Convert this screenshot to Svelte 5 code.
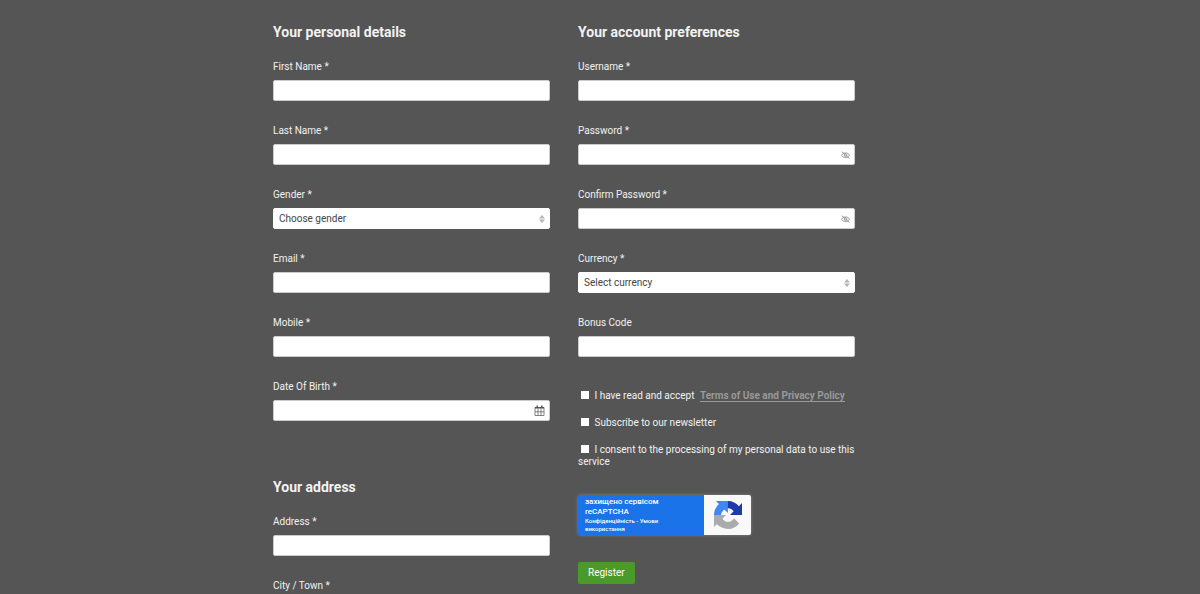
<script lang="ts">
	type Field = { id: string; label: string; kind?: string; placeholder?: string };

	const personal: Field[] = [
		{ id: "firstName", label: "First Name *" },
		{ id: "lastName", label: "Last Name *" },
		{ id: "gender", label: "Gender *", kind: "select", placeholder: "Choose gender" },
		{ id: "email", label: "Email *", kind: "email" },
		{ id: "mobile", label: "Mobile *", kind: "tel" },
		{ id: "birth", label: "Date Of Birth *", kind: "date" }
	];

	const address: Field[] = [
		{ id: "address", label: "Address *" },
		{ id: "city", label: "City / Town *" }
	];

	const account: Field[] = [
		{ id: "username", label: "Username *" },
		{ id: "password", label: "Password *", kind: "password" },
		{ id: "confirm", label: "Confirm Password *", kind: "password" },
		{ id: "currency", label: "Currency *", kind: "select", placeholder: "Select currency" },
		{ id: "bonus", label: "Bonus Code" }
	];
</script>

{#snippet fieldRow(field: Field)}
	<div class="field">
		<label for={field.id}>{field.label}</label>
		<div class="control">
			{#if field.kind === "select"}
				<select id={field.id}>
					<option>{field.placeholder}</option>
				</select>
				<svg class="icon arrows" viewBox="0 0 6 8" aria-hidden="true">
					<path d="M3 0L6 3.4H0zM3 8L0 4.6H6z" fill="#b4b4b4" />
				</svg>
			{:else}
				<input id={field.id} type={field.kind === "date" ? "text" : (field.kind ?? "text")} />
			{/if}
			{#if field.kind === "password"}
				<button class="icon eye" type="button" aria-label="Show password">
					<svg viewBox="0 0 16 14" aria-hidden="true">
						<g fill="none" stroke="#8c8c8c" stroke-width="1.5">
							<path d="M1 7.5C4 1.8 12 1.8 15 7.5C12 13 4 13 1 7.5z" />
							<circle cx="8" cy="7.2" r="2.5" />
							<path d="M1 1L15 13.2" />
						</g>
					</svg>
				</button>
			{:else if field.kind === "date"}
				<button class="icon calendar" type="button" aria-label="Open calendar">
					<svg viewBox="0 0 10 11" aria-hidden="true">
						<path d="M.5 2.5h9v8h-9zM.5 6.8h9M3.5 3.5v7M6.5 3.5v7" fill="none" stroke="#666" stroke-width=".8" />
						<path d="M.5 2h9v1.5h-9zM2 .5h1.5v2H2zM6.5.5H8v2H6.5z" fill="#555" />
					</svg>
				</button>
			{/if}
		</div>
	</div>
{/snippet}

<form class="register">
	<div class="column">
		<section>
			<h2>Your personal details</h2>
			{#each personal as field}
				{@render fieldRow(field)}
			{/each}
		</section>
		<section>
			<h2>Your address</h2>
			{#each address as field}
				{@render fieldRow(field)}
			{/each}
		</section>
	</div>

	<div class="column">
		<section>
			<h2>Your account preferences</h2>
			{#each account as field}
				{@render fieldRow(field)}
			{/each}
		</section>

		<div class="checks">
			<div class="check">
				<input id="terms" type="checkbox" />
				<label for="terms">I have read and accept</label>
				<a href="#terms">Terms of Use and Privacy Policy</a>
			</div>
			<div class="check">
				<input id="news" type="checkbox" />
				<label for="news">Subscribe to our newsletter</label>
			</div>
			<div class="check">
				<input id="consent" type="checkbox" />
				<label for="consent">I consent to the processing of my personal data to use this service</label>
			</div>
		</div>

		<div class="captcha">
			<div class="captcha-text">
				<span>захищено сервісом</span>
				<strong>reCAPTCHA</strong>
				<small><a href="#privacy">Конфіденційність</a> - <a href="#use">Умови використання</a></small>
			</div>
			<div class="captcha-logo">
				<svg viewBox="0 0 64 64" aria-hidden="true">
					<path d="M64 31.955c-.002-.46-.012-.918-.033-1.373V4.645l-7.171 7.171C50.927 4.632 42 .046 32 .046c-10.4 0-19.643 4.954-25.477 12.627l11.754 11.878a15.57 15.57 0 0 1 4.76-5.341c2.052-1.6 4.96-2.91 8.962-2.91.483 0 .856.056 1.13.163 4.958.391 9.255 3.127 11.786 7.1l-8.32 8.321z" fill="#1c3aa9" />
					<path d="M31.862.094c-.46.002-.918.012-1.373.033H4.55l7.171 7.17C4.5 13.2 0 22 0 32.1c0 10.4 4.854 19.6 12.527 25.5L24.46 45.8a15.6 15.6 0 0 1-5.341-4.76c-1.6-2.05-2.91-4.96-2.91-8.96 0-.483.056-.856.163-1.13.391-4.96 3.127-9.26 7.1-11.79l8.32 8.32z" fill="#4285f4" />
					<path d="M.001 32.045c.002.46.012.918.033 1.373v25.937l7.171-7.171C13.07 59.37 22 63.95 32 63.95c10.4 0 19.64-4.95 25.48-12.63L45.72 39.45a15.57 15.57 0 0 1-4.76 5.34c-2.05 1.6-4.96 2.91-8.96 2.91-.483 0-.856-.056-1.13-.163-4.96-.391-9.26-3.127-11.79-7.1l8.32-8.32z" fill="#ababab" />
				</svg>
			</div>
		</div>

		<button class="submit" type="submit">Register</button>
	</div>
</form>

<style>
	:global(html) {
		scrollbar-width: none;
	}

	:global(body) {
		background: #555;
	}

	/* two columns, with free space kept on the right */
	.register {
		box-sizing: border-box;
		max-width: 654px;
		margin: 0 auto;
		padding: 24px 72px 0 0;
		display: grid;
		grid-template-columns: 1fr 1fr;
		column-gap: 28px;
		color: #f2f2f2;
		font-family: Roboto, "Liberation Sans", sans-serif;
		font-size: 10px;
		line-height: 12px;
	}

	h2 {
		margin: 0 0 20px;
		font-size: 14px;
		line-height: 16px;
		font-weight: 700;
	}

	section + section {
		margin-top: 35px;
	}

	.field {
		padding-bottom: 23px;
	}

	.field label {
		display: block;
		padding-top: 1px;
		margin-bottom: 7px;
	}

	.control {
		position: relative;
		height: 21px;
	}

	.control input,
	.control select {
		box-sizing: border-box;
		display: block;
		width: 100%;
		height: 21px;
		padding: 0 6px;
		border: 1px solid #ccc;
		border-radius: 2px;
		background: #fff;
		color: #444;
		font: inherit;
		appearance: none;
	}

	.control select {
		padding: 0 5px;
		border-color: #fff;
	}

	/* icons laid over the right end of a control */
	.icon {
		position: absolute;
		top: 0;
		bottom: 0;
		right: 5px;
		margin: auto 0;
		padding: 0;
		border: 0;
		background: none;
	}

	.icon svg {
		display: block;
		width: 100%;
		height: 100%;
	}

	.arrows {
		width: 6px;
		height: 8px;
		pointer-events: none;
	}

	.eye {
		width: 9px;
		height: 8px;
	}

	.calendar {
		width: 11px;
		height: 11px;
	}

	.checks {
		display: grid;
		row-gap: 15px;
		margin-top: 10px;
	}

	.check input {
		width: 8px;
		height: 8px;
		margin: 0 3px;
		background: #fff;
		appearance: none;
	}

	.check input:checked {
		background: #4a9a2a;
	}

	.check a {
		margin-left: 3px;
		border-bottom: 1px solid #999;
		color: #999;
		font-weight: 700;
		text-decoration: none;
	}

	.captcha {
		display: flex;
		width: 173px;
		height: 40px;
		margin-top: 27px;
		border-radius: 2px;
		box-shadow: 0 0 3px #888;
		overflow: hidden;
	}

	.captcha-text {
		box-sizing: border-box;
		flex: 1;
		padding: 2px 7px 0;
		background: #1a73e8;
		color: #fff;
		font-size: 8px;
		line-height: 10px;
	}

	.captcha-text span,
	.captcha-text strong,
	.captcha-text small {
		display: block;
		font-weight: 500;
	}

	.captcha-text small {
		width: 80px;
		font-size: 6px;
		line-height: 8px;
	}

	.captcha-text a {
		color: inherit;
		text-decoration: none;
	}

	.captcha-logo {
		display: flex;
		align-items: center;
		justify-content: center;
		width: 47px;
		background: #f9f9f9;
	}

	.captcha-logo svg {
		width: 28px;
		height: 28px;
	}

	.submit {
		height: 22px;
		margin-top: 27px;
		padding: 0 10px;
		border: 0;
		border-radius: 2px;
		background: #4a9a2a;
		color: #fff;
		font: inherit;
	}
</style>
